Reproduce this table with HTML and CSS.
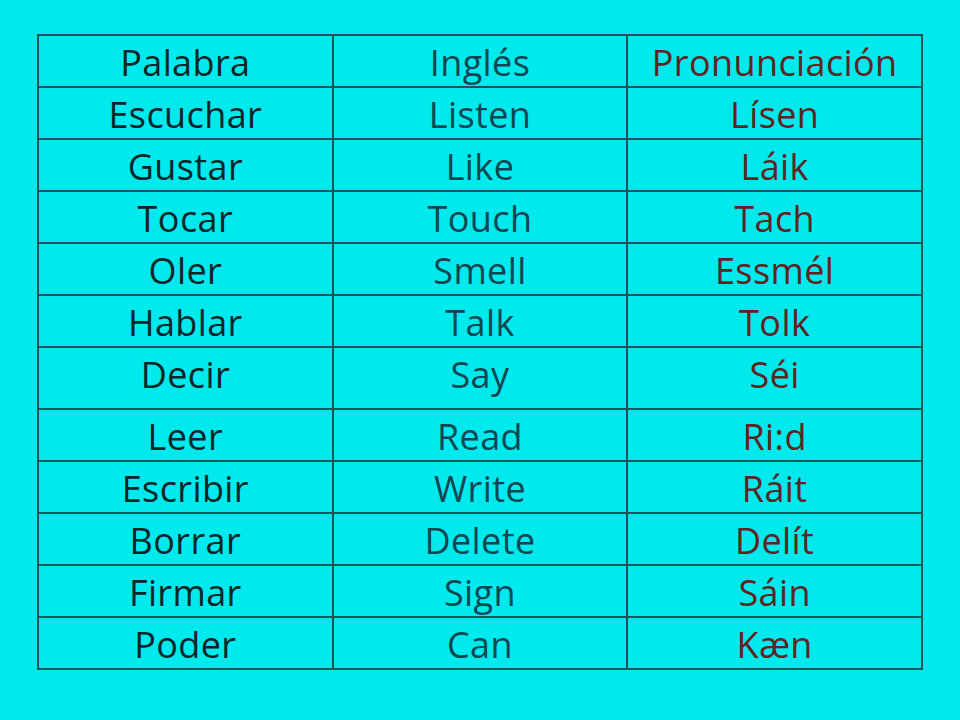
FILE: index.html
```html
<!DOCTYPE html>
<html>
<head>
<meta charset="utf-8">
<link rel="stylesheet" href="styles.css">
</head>
<body>
<table class="vocab">
  <tr><td class="es">Palabra</td><td class="en">Inglés</td><td class="pr">Pronunciación</td></tr>
  <tr><td class="es">Escuchar</td><td class="en">Listen</td><td class="pr">Lísen</td></tr>
  <tr><td class="es">Gustar</td><td class="en">Like</td><td class="pr">Láik</td></tr>
  <tr><td class="es">Tocar</td><td class="en">Touch</td><td class="pr">Tach</td></tr>
  <tr><td class="es">Oler</td><td class="en">Smell</td><td class="pr">Essmél</td></tr>
  <tr><td class="es">Hablar</td><td class="en">Talk</td><td class="pr">Tolk</td></tr>
  <tr class="tall"><td class="es">Decir</td><td class="en">Say</td><td class="pr">Séi</td></tr>
  <tr><td class="es">Leer</td><td class="en">Read</td><td class="pr">Ri:d</td></tr>
  <tr><td class="es">Escribir</td><td class="en">Write</td><td class="pr">Ráit</td></tr>
  <tr><td class="es">Borrar</td><td class="en">Delete</td><td class="pr">Delít</td></tr>
  <tr><td class="es">Firmar</td><td class="en">Sign</td><td class="pr">Sáin</td></tr>
  <tr><td class="es">Poder</td><td class="en">Can</td><td class="pr">Kæn</td></tr>
</table>
</body>
</html>
```
FILE: styles.css
```css
html, body {
  margin: 0;
  padding: 0;
  background: #00e9ec;
  width: 960px;
  height: 720px;
  overflow: hidden;
}
.vocab {
  border-collapse: collapse;
  margin: 34px 0 0 37px;
  width: 886px;
  table-layout: fixed;
  font-family: "Open Sans", Lato, sans-serif;
  font-size: 36px;
  font-weight: 500;
  letter-spacing: 0.4px;
}
.vocab td {
  border: 2px solid #1c5558;
  height: 52px;
  padding: 3px 0 0 0;
  box-sizing: border-box;
  text-align: center;
  vertical-align: middle;
  line-height: 40px;
}
.vocab tr.tall td {
  height: 62px;
  padding: 0 0 6px 0;
}
.es { color: #0a2628; }
.en { color: #104652; }
.pr { color: #5e2422; }
```
